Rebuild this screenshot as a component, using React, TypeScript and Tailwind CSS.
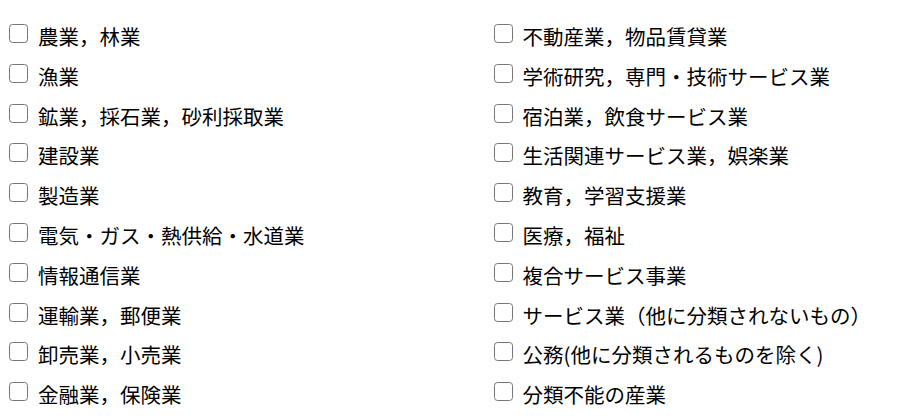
import React from "react";

const left = [
  "農業，林業",
  "漁業",
  "鉱業，採石業，砂利採取業",
  "建設業",
  "製造業",
  "電気・ガス・熱供給・水道業",
  "情報通信業",
  "運輸業，郵便業",
  "卸売業，小売業",
  "金融業，保険業",
];
const right = [
  "不動産業，物品賃貸業",
  "学術研究，専門・技術サービス業",
  "宿泊業，飲食サービス業",
  "生活関連サービス業，娯楽業",
  "教育，学習支援業",
  "医療，福祉",
  "複合サービス事業",
  "サービス業（他に分類されないもの）",
  "公務(他に分類されるものを除く)",
  "分類不能の産業",
];

function Item({ label }: { label: string }) {
  return (
    <label className="flex items-start h-[39.8px]">
      <span className="mt-[24px] w-[19px] h-[19px] shrink-0 rounded-[3.5px] border-[1.5px] border-[#767676] bg-white" />
      <span className="ml-[10px] mt-[21px] text-[20.5px] leading-[30px] text-black whitespace-nowrap">
        {label}
      </span>
    </label>
  );
}

export default function App() {
  return (
    <div
      className="w-[915px] h-[419px] bg-white overflow-hidden pl-[9px] grid grid-cols-[484.5px_1fr]"
      style={{ fontFamily: '"Noto Sans CJK JP", "Noto Sans", sans-serif' }}
    >
      <div className="flex flex-col">
        {left.map((l) => (
          <Item key={l} label={l} />
        ))}
      </div>
      <div className="flex flex-col">
        {right.map((l) => (
          <Item key={l} label={l} />
        ))}
      </div>
    </div>
  );
}
